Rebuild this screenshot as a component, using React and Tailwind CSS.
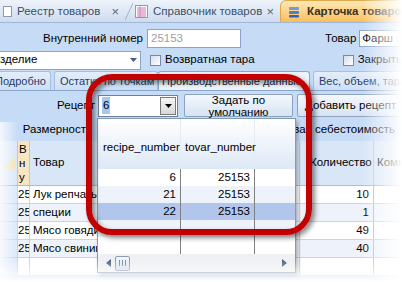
import React from 'react';

const rows = [
  ['25153', 'Лук репчатый', '10'],
  ['25153', 'специи', '1'],
  ['25153', 'Мясо говядина', '49'],
  ['25153', 'Мясо свинина', '40'],
  ['', '', ''],
];

const recipes = [
  ['6', '25153'],
  ['21', '25153'],
  ['22', '25153'],
  ['', ''],
  ['', ''],
];

function TopTab({ children, icon, close, className }) {
  return (
    <div className={`flex h-[21px] shrink-0 items-center ${className}`}>
      {icon}
      <span className="ml-[5px] whitespace-nowrap">{children}</span>
      {close && <span className="ml-auto mr-[6px] text-[13px] text-[#5a6b80]">×</span>}
    </div>
  );
}

function Check() {
  return <span className="inline-block h-[11px] w-[11px] border border-[#7a8aa0] bg-gradient-to-br from-[#d8dde4] to-[#ffffff]" />;
}

function SubTab({ children, active, className }) {
  return (
    <div
      className={`flex h-[19px] shrink-0 items-center whitespace-nowrap rounded-t-[3px] border border-b-0 text-[11px] ${
        active ? 'border-[#8aa6cc] bg-[#eef4fc] pl-[3px] text-[#1e2a3a]' : 'border-[#a7bfdf] bg-gradient-to-b from-[#e4edf9] to-[#cddff5] pl-[5px] text-[#1f3d6b]'
      } ${className}`}
    >
      {children}
    </div>
  );
}

export default function App() {
  return (
    <div className="relative h-[282px] w-[402px] overflow-hidden bg-[#c6dbf5] font-['Liberation_Sans',Arial,sans-serif] text-[11.5px] text-black">
      {/* document tabs */}
      <div className="flex h-[23px] items-end border-b border-[#9fb8d8] bg-gradient-to-b from-[#eef3fa] to-[#cfdcee] text-[#3b4f6a]">
        <TopTab
          className="w-[125px] pl-[3px]"
          close
          icon={<span className="h-[11px] w-[9px] border border-[#8c9bb0] bg-white" />}
        >
          Реестр товаров
        </TopTab>
        <div className="h-[21px] w-[8px] shrink-0 bg-[linear-gradient(115deg,transparent_45%,#9fb3cc_50%,transparent_56%)]" />
        <TopTab
          className="w-[147px] pl-[2px]"
          close
          icon={
            <svg width="13" height="13" viewBox="0 0 13 13">
              <rect x="0.5" y="0.5" width="12" height="12" fill="#fff" stroke="#b08aa8" />
              <path d="M2 3h9M2 5h9M2 7h9M2 9h9M2 11h9" stroke="#d24aa0" strokeWidth="0.8" />
              <path d="M5 1v11" stroke="#b08aa8" strokeWidth="0.8" />
            </svg>
          }
        >
          Справочник товаров
        </TopTab>
        <div className="flex h-[22px] min-w-0 flex-1 items-center rounded-tl-[6px] border border-b-0 border-[#e1a74a] bg-gradient-to-b from-[#fee8b4] to-[#f8bf5a] pl-[7px] font-bold text-[#3a3020]">
          <svg className="shrink-0" width="12" height="12" viewBox="0 0 12 12">
            <rect x="1" y="1" width="10" height="3" rx="1" fill="#6f9be0" />
            <rect x="1" y="5" width="10" height="3" rx="1" fill="#4b7fd0" />
            <rect x="1" y="9" width="10" height="2.5" rx="1" fill="#2f62b8" />
          </svg>
          <span className="ml-[7px] whitespace-nowrap">Карточка товаров</span>
        </div>
      </div>

      {/* row 1 */}
      <div className="mt-[6px] flex h-[19px] items-center">
        <span className="w-[143px] shrink-0 text-right">Внутренний номер</span>
        <div className="ml-[4px] flex h-[19px] w-[94px] shrink-0 items-center border border-[#8aa4c8] bg-white pl-[3px] text-[#a0a0a0]">25153</div>
        <span className="ml-[84px] shrink-0">Товар</span>
        <div className="ml-[3px] flex h-[17px] min-w-0 flex-1 items-center overflow-hidden border border-[#8aa4c8] bg-white pl-[2px] whitespace-nowrap">
          Фарш <span className="ml-[3px] text-[#b0b0b0]">свиной</span>
        </div>
      </div>

      {/* row 2 */}
      <div className="mt-[2px] flex h-[20px] items-center whitespace-nowrap">
        <div className="flex h-[19px] w-[141px] shrink-0 items-center border border-l-0 border-[#8aa4c8] bg-white pr-[3px]">
          <span>зделие</span>
          <svg className="ml-auto" width="7" height="4" viewBox="0 0 7 4">
            <path d="M0 0h7L3.5 4z" fill="#3f5d8c" />
          </svg>
        </div>
        <span className="ml-[9px] flex shrink-0"><Check /></span>
        <span className="ml-[4px] shrink-0">Возвратная тара</span>
        <span className="ml-[88px] flex shrink-0"><Check /></span>
        <span className="ml-[4px] shrink-0">Закрытый</span>
      </div>

      {/* page tabs */}
      <div className="mt-[2px] flex h-[19px] items-end border-b border-[#8aa6cc]">
        <SubTab className="-ml-[11px] w-[62px]">Подробно</SubTab>
        <SubTab className="ml-[3px] w-[104px]">Остатки по точкам</SubTab>
        <SubTab active className="w-[152px]">Производственные данные</SubTab>
        <SubTab className="ml-[3px] w-[100px]">Вес, объем, тара</SubTab>
      </div>

      {/* recipe row */}
      <div className="mt-[3px] flex h-[23px] items-center">
        <span className="w-[95px] shrink-0 text-right">Рецепт</span>
        <div className="ml-[3px] flex h-[22px] w-[80px] shrink-0 items-center border border-[#6f7f95] bg-white pl-[3px]">
          <span className="bg-[#a9c7ee] px-[1px]">6</span>
          <div className="ml-auto mr-[1px] flex h-[18px] w-[16px] items-center justify-center border border-[#7a7a7a] bg-gradient-to-b from-[#f6f6f6] to-[#d8d8d8]">
            <svg width="7" height="4" viewBox="0 0 7 4">
              <path d="M0 0h7L3.5 4z" fill="#000" />
            </svg>
          </div>
        </div>
        <div className="ml-[6px] flex h-[23px] w-[109px] shrink-0 flex-col items-center justify-center rounded-[2px] border border-[#8ea2bd] bg-gradient-to-b from-[#f4f8fd] to-[#d6e3f3] leading-[12px]">
          <span>Задать по</span>
          <span>умолчанию</span>
        </div>
        <div className="ml-[4px] flex h-[23px] min-w-0 flex-1 items-center overflow-hidden rounded-[2px] border border-[#8ea2bd] bg-gradient-to-b from-[#f4f8fd] to-[#d6e3f3] pl-[7px] whitespace-nowrap">
          Добавить рецепт
        </div>
      </div>

      {/* size row */}
      <div className="mt-[3px] flex h-[19px] items-center whitespace-nowrap">
        <span className="w-[92px] shrink-0 text-right">Размерность</span>
        <span className="ml-auto mr-[7px]">Плановая себестоимость</span>
      </div>

      {/* background grid */}
      <div className="mt-[2px] bg-white">
        <div className="flex h-[45px] border-b border-[#a9bcd6] bg-[#d8e6f7] whitespace-nowrap">
          <div className="flex w-[17px] shrink-0 items-center justify-center bg-[#d8e6f7]">
            <svg width="12" height="12" viewBox="0 0 12 12">
              <path d="M12 0v12H0z" fill="#f3dfb2" />
            </svg>
          </div>
          <div className="flex w-[13px] shrink-0 flex-col justify-center border-x border-[#b7c9e0] bg-[#f8e6c1] pl-[1px] leading-[14px]">
            <span>В</span>
            <span>н</span>
            <span>у</span>
          </div>
          <div className="flex w-[270px] shrink-0 items-center border-r border-[#b7c9e0] pl-[3px]">Товар</div>
          <div className="flex w-[74px] shrink-0 items-center border-r border-[#b7c9e0] pl-[10px]">Количество</div>
          <div className="flex min-w-0 flex-1 items-center overflow-hidden pl-[3px]">Комментарий</div>
        </div>
        {rows.map(([id, name, qty], i) => (
          <div key={i} className={`flex h-[18px] border-b border-[#c9d3e2] whitespace-nowrap ${i % 2 ? 'bg-[#eef3fb]' : 'bg-white'}`}>
            <div className="w-[17px] shrink-0 bg-[#dbe8f8]" />
            <div className="w-[13px] shrink-0 overflow-hidden border-x border-[#c9d3e2] leading-[17px]">{id}</div>
            <div className="w-[270px] shrink-0 overflow-hidden border-r border-[#c9d3e2] pl-[3px] leading-[17px]">{name}</div>
            <div className="w-[74px] shrink-0 border-r border-[#a9bcd6] pr-[4px] text-right leading-[17px]">{qty}</div>
            <div className="min-w-0 flex-1" />
          </div>
        ))}
      </div>

      {/* recipe dropdown */}
      <div className="absolute left-[97px] top-[118px] w-[199px] border border-[#7f9db9] bg-white shadow-[2px_3px_4px_rgba(0,0,0,0.3)]">
        <div className="flex h-[50px] bg-gradient-to-b from-[#ffffff] to-[#dde8f6]">
          <div className="flex w-[83px] shrink-0 items-center border-r border-[#e3ebf5] pl-[5px] pt-[8px]">recipe_number</div>
          <div className="flex w-[74px] shrink-0 items-center border-r border-[#e3ebf5] pl-[4px] pt-[8px]">tovar_number</div>
          <div className="flex-1" />
        </div>
        {recipes.map(([num, tovar], i) => (
          <div
            key={i}
            className={`flex h-[17px] leading-[17px] ${i === 2 ? 'bg-[#b1c6ea]' : i % 2 ? 'bg-[#eef3fb]' : 'bg-white'}`}
          >
            <div className="w-[83px] shrink-0 border-r border-[#808080] pr-[4px] text-right">{num}</div>
            <div className="w-[74px] shrink-0 border-r border-[#808080] pr-[4px] text-right">{tovar}</div>
            <div className="flex-1" />
          </div>
        ))}
        <div className="flex h-[18px] items-center bg-[#eef0f3] px-[8px]">
          <svg width="5" height="8" viewBox="0 0 5 8">
            <path d="M5 0v8L0 4z" fill="#4a5f80" />
          </svg>
          <div className="ml-[4px] flex h-[15px] w-[15px] items-center justify-center rounded-[2px] border border-[#8c9cb4] bg-gradient-to-b from-[#f4f7fb] to-[#d4dde9]">
            <span className="h-[6px] w-[7px] border-x border-[#7a8aa3] bg-[linear-gradient(90deg,transparent_40%,#7a8aa3_40%,#7a8aa3_60%,transparent_60%)]" />
          </div>
          <svg className="ml-auto" width="5" height="8" viewBox="0 0 5 8">
            <path d="M0 0v8L5 4z" fill="#4a5f80" />
          </svg>
        </div>
      </div>

      {/* red highlight */}
      <div className="pointer-events-none absolute left-[86px] top-[74px] h-[161px] w-[226px] rounded-[26px] border-[6px] border-[#c30000] shadow-[3px_3px_5px_rgba(0,0,0,0.45),inset_3px_3px_5px_rgba(0,0,0,0.45)]" />

      {/* edge fades */}
      <div className="pointer-events-none absolute right-0 top-0 h-full w-[40px] bg-gradient-to-r from-transparent to-white" />
      <div className="pointer-events-none absolute bottom-0 left-0 h-[22px] w-full bg-gradient-to-b from-transparent to-white" />
      <div className="pointer-events-none absolute bottom-0 left-0 h-[160px] w-[18px] bg-gradient-to-l from-transparent to-[rgba(255,255,255,0.8)]" />
    </div>
  );
}
